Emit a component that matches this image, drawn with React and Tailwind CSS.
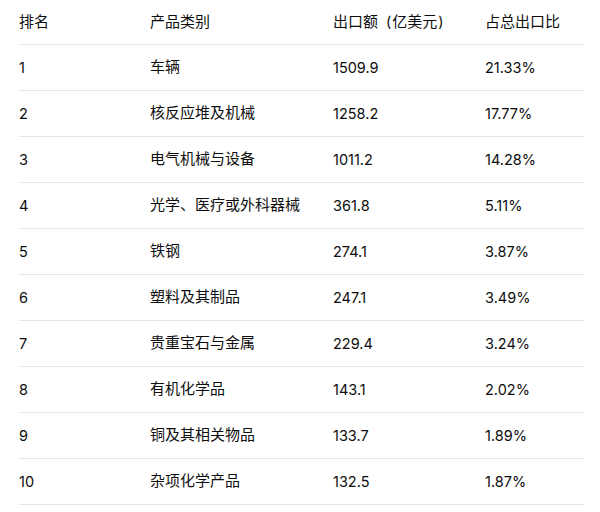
import React from "react";

const rows = [
  ["1", "车辆", "1509.9", "21.33%"],
  ["2", "核反应堆及机械", "1258.2", "17.77%"],
  ["3", "电气机械与设备", "1011.2", "14.28%"],
  ["4", "光学、医疗或外科器械", "361.8", "5.11%"],
  ["5", "铁钢", "274.1", "3.87%"],
  ["6", "塑料及其制品", "247.1", "3.49%"],
  ["7", "贵重宝石与金属", "229.4", "3.24%"],
  ["8", "有机化学品", "143.1", "2.02%"],
  ["9", "铜及其相关物品", "133.7", "1.89%"],
  ["10", "杂项化学产品", "132.5", "1.87%"],
];

const cols = "grid grid-cols-[131px_183px_152px_100px]";

export default function App() {
  return (
    <div
      className="w-[600px] h-[512px] bg-white text-[14.5px] text-[#0d0d0d] overflow-hidden"
      style={{ fontFamily: 'Inter, "Noto Sans CJK SC", sans-serif' }}
    >
      <div className="ml-[19px] w-[566px]">
        <div className={`${cols} h-[45px] items-center border-b border-[#e5e5e5] text-[15px]`}>
          <div>排名</div>
          <div>产品类别</div>
          <div>
            出口额<span className="text-[14.5px] ml-[8px] mr-[1px]">(</span>亿美元<span className="text-[14.5px] ml-[1px]">)</span>
          </div>
          <div>占总出口比</div>
        </div>
        {rows.map((r) => (
          <div key={r[0]} className={`${cols} h-[46px] items-center border-b border-[#e5e5e5]`}>
            <div>{r[0]}</div>
            <div className="text-[15px]">{r[1]}</div>
            <div>{r[2]}</div>
            <div>{r[3]}</div>
          </div>
        ))}
      </div>
    </div>
  );
}
